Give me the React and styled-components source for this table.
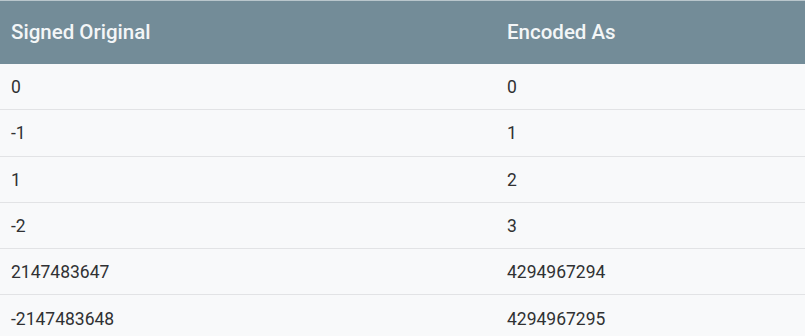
import React from 'react'
import styled, { createGlobalStyle } from 'styled-components'

const GlobalStyle = createGlobalStyle`
  html, body {
    margin: 0;
    padding: 0;
    background: #f8f9fa;
    font-family: Roboto, "Liberation Sans", sans-serif;
  }
`

const rows = [
  ['0', '0'],
  ['-1', '1'],
  ['1', '2'],
  ['-2', '3'],
  ['2147483647', '4294967294'],
  ['-2147483648', '4294967295'],
]

function App() {
  return (
    <>
      <GlobalStyle />
      <Table>
        <thead>
          <HeadRow>
            <HeadCell $width="474px">Signed Original</HeadCell>
            <HeadCell>Encoded As</HeadCell>
          </HeadRow>
        </thead>
        <tbody>
          {rows.map(([a, b], i) => (
            <Row key={i}>
              <Cell>{a}</Cell>
              <Cell>{b}</Cell>
            </Row>
          ))}
        </tbody>
      </Table>
    </>
  )
}

export default App

const Table = styled.table`
  width: 805px;
  border-collapse: collapse;
  table-layout: fixed;
  border-top: 1px solid #b9c6cc;
`
const HeadRow = styled.tr`
  height: 63px;
  background-color: #738c98;
`
const HeadCell = styled.th`
  width: ${p => p.$width || 'auto'};
  padding: 0 11px 1px;
  text-align: left;
  font-size: 20.5px;
  font-weight: 500;
  color: #f3f6f7;
`
const Row = styled.tr`
  height: 46.25px;
  background-color: #f8f9fa;
  border-top: 1px solid #e2e3e5;
  &:first-child {
    border-top: none;
  }
`
const Cell = styled.td`
  padding: 1px 11px 0;
  font-size: 17.5px;
  color: #303133;
`
